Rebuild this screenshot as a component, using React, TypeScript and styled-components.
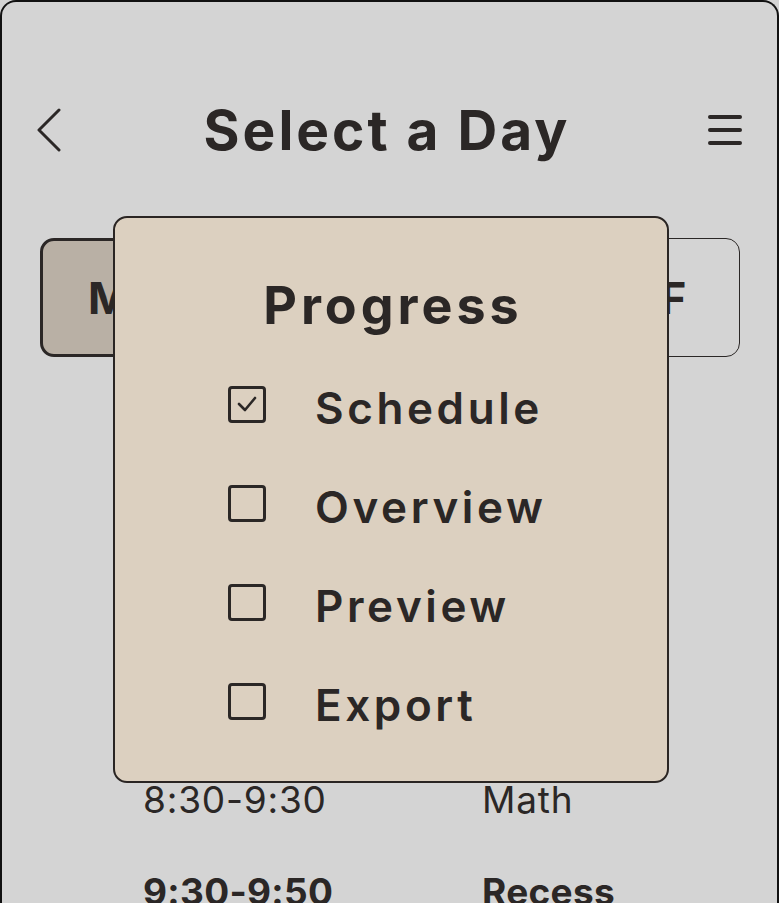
import React from 'react';
import styled, { createGlobalStyle } from 'styled-components';

const GlobalStyle = createGlobalStyle`
  html, body {
    margin: 0;
    padding: 0;
    background: #d4d4d4;
    overflow: hidden;
  }
  body {
    font-family: 'Inter', 'Noto Sans', sans-serif;
    color: #2b2726;
  }
`;

const Frame = styled.div`
  position: relative;
  box-sizing: border-box;
  width: 779px;
  min-height: 960px;
  background: #d4d4d4;
  border: 2px solid #111;
  border-bottom: none;
  border-radius: 16px 16px 0 0;
  padding: 0 37px 0 38px;
`;

const Header = styled.header`
  display: flex;
  align-items: center;
  justify-content: space-between;
  height: 60px;
  margin: 98px -2px 0 -4px;
`;

const IconButton = styled.button`
  display: flex;
  align-items: center;
  background: none;
  border: none;
  padding: 0;
  height: 50px;
  color: #2b2726;
`;

const Title = styled.h1`
  margin: 0 0 0 4px;
  font-size: 55px;
  font-weight: 700;
  letter-spacing: 3px;
`;

const DayRow = styled.div`
  display: flex;
  gap: 7.5px;
  margin-top: 78px;
`;

const DayTab = styled.div<{ $active?: boolean }>`
  box-sizing: border-box;
  flex: 1;
  height: 119px;
  display: flex;
  align-items: center;
  justify-content: center;
  font-size: 44px;
  font-weight: 700;
  border-radius: 14px;
  border: ${(p) => (p.$active ? '3px solid #2b2726' : '1px solid #2b2726')};
  background: ${(p) => (p.$active ? '#b9b0a5' : 'transparent')};
`;

const Schedule = styled.div`
  display: grid;
  grid-template-columns: 339px 1fr;
  row-gap: 52px;
  padding-left: 103px;
  margin-top: 147px;
  font-size: 37px;
  line-height: 40px;
`;

const Cell = styled.div<{ $bold?: boolean }>`
  font-weight: ${(p) => (p.$bold ? 700 : 400)};
  white-space: nowrap;
  letter-spacing: ${(p) => (p.$bold ? '0.3px' : '0.8px')};
`;

const Popup = styled.div`
  position: absolute;
  top: 214px;
  left: 111px;
  box-sizing: border-box;
  width: 556px;
  height: 567px;
  background: #dcd0c0;
  border: 2px solid #2a2523;
  border-radius: 14px;
  display: flex;
  flex-direction: column;
  align-items: center;
`;

const PopupTitle = styled.h2`
  margin: 58px 0 0 4px;
  font-size: 52px;
  line-height: 60px;
  font-weight: 700;
  letter-spacing: 4px;
`;

const OptionList = styled.ul`
  list-style: none;
  margin: 45px 0 0;
  padding: 0 0 0 113px;
  align-self: stretch;
  display: flex;
  flex-direction: column;
  gap: 45px;
`;

const Option = styled.li`
  display: flex;
  align-items: center;
  gap: 49px;
  height: 54px;
  font-size: 44px;
  font-weight: 600;
  letter-spacing: 3.6px;
`;

const Box = styled.span`
  box-sizing: border-box;
  flex: none;
  width: 38px;
  height: 37px;
  border: 3px solid #2b2726;
  border-radius: 4px;
  display: flex;
  align-items: center;
  justify-content: center;
  margin-top: -8px;
`;

const days = ['M', 'T', 'W', 'T', 'F'];

const rows = [
  { time: '7:50-8:00', subject: 'Arrival', bold: false },
  { time: '8:00-8:10', subject: 'Music', bold: false },
  { time: '8:10-8:30', subject: 'Reading', bold: false },
  { time: '8:30-9:30', subject: 'Math', bold: false },
  { time: '9:30-9:50', subject: 'Recess', bold: true },
];

const options = [
  { label: 'Schedule', checked: true },
  { label: 'Overview', checked: false },
  { label: 'Preview', checked: false },
  { label: 'Export', checked: false },
];

export default function App() {
  return (
    <>
      <GlobalStyle />
      <Frame>
        <Header>
          <IconButton aria-label="Back">
            <svg width="26" height="44" viewBox="0 0 26 44" fill="none">
              <path d="M23 2 L3 22 L23 42" stroke="currentColor" strokeWidth="3" strokeLinecap="round" strokeLinejoin="round" />
            </svg>
          </IconButton>
          <Title>Select a Day</Title>
          <IconButton aria-label="Menu">
            <svg width="34" height="32" viewBox="0 0 34 32" fill="none">
              <path d="M2 3 H32 M2 16 H32 M2 29 H32" stroke="currentColor" strokeWidth="4" strokeLinecap="round" />
            </svg>
          </IconButton>
        </Header>

        <DayRow>
          {days.map((d, i) => (
            <DayTab key={i} $active={i === 0}>
              {d}
            </DayTab>
          ))}
        </DayRow>

        <Schedule>
          {rows.map((r) => (
            <React.Fragment key={r.time}>
              <Cell $bold={r.bold}>{r.time}</Cell>
              <Cell $bold={r.bold}>{r.subject}</Cell>
            </React.Fragment>
          ))}
        </Schedule>

        <Popup>
          <PopupTitle>Progress</PopupTitle>
          <OptionList>
            {options.map((o) => (
              <Option key={o.label}>
                <Box>
                  {o.checked && (
                    <svg width="22" height="18" viewBox="0 0 22 18" fill="none">
                      <path d="M3 9 L9 15 L19 3" stroke="#2b2726" strokeWidth="2.6" strokeLinecap="round" strokeLinejoin="round" />
                    </svg>
                  )}
                </Box>
                {o.label}
              </Option>
            ))}
          </OptionList>
        </Popup>
      </Frame>
    </>
  );
}
